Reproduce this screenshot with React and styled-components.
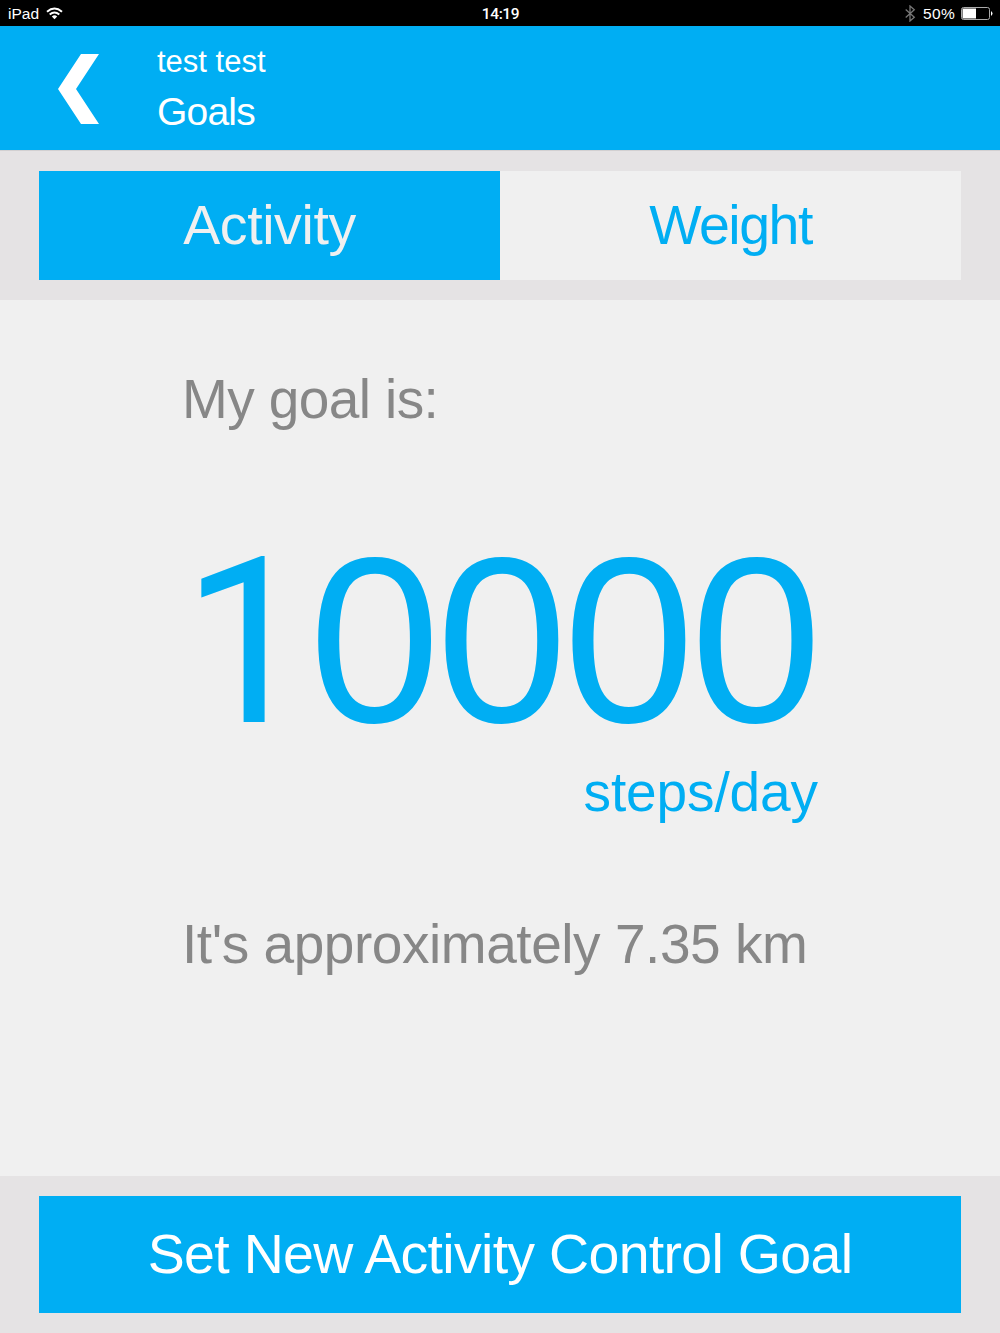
import React from 'react';
import styled, { createGlobalStyle } from 'styled-components';

const Global = createGlobalStyle`
  * { box-sizing: border-box; }
  body { margin: 0; background: #f0f0f0; font-family: "Liberation Sans", Arial, sans-serif; }
`;

const Screen = styled.div`
  width: 1000px; height: 1333px; display: flex; flex-direction: column;
  background: #f0f0f0; overflow: hidden;
`;
const StatusBar = styled.div`
  height: 26px; flex: none; background: #000; color: #fff; padding: 1px 7px 0 8px;
  display: grid; grid-template-columns: 1fr auto 1fr; align-items: center;
  font-size: 15.5px; line-height: 25px;
`;
const StatusGroup = styled.div`
  display: flex; align-items: center; gap: ${p => (p.$end ? 6 : 7)}px;
  justify-content: ${p => (p.$end ? 'flex-end' : 'flex-start')};
`;
const Clock = styled.time`
  font-family: Roboto, sans-serif; font-weight: 500; font-size: 15.5px; letter-spacing: -0.4px;
  padding-top: 1px; line-height: 24px;
`;
const Header = styled.header`
  height: 124px; flex: none; background: #00aef3; color: #fff;
  display: flex; padding-left: 57px;
`;
const Back = styled.button`
  border: 0; padding: 2px 0 0; background: none; width: 100px; display: flex; align-items: center;
`;
const Titles = styled.div`display: flex; flex-direction: column; padding-top: 18px;`;
const User = styled.div`font-size: 31px; line-height: 36px;`;
const Title = styled.div`font-size: 39px; line-height: 44px; margin-top: 10px; letter-spacing: -0.8px;`;
const TabBar = styled.nav`
  height: 150px; flex: none; background: #e5e3e4; border-top: 1px solid #d2d0d1;
  padding: 20px 39px; display: flex;
`;
const Tab = styled.button`
  flex: 1; border: 0; padding: 0 0 2px; font: inherit; font-size: 55.5px;
  background: ${p => (p.$active ? '#00aef3' : '#f0f0f0')};
  color: ${p => (p.$active ? '#f0f0f0' : '#00aef3')};
`;
const Main = styled.main`flex: 1; padding: 67px 182px 0; display: flex; flex-direction: column;`;
const Note = styled.p`
  margin: 0; color: #878787; font-size: 55px; line-height: 64px; white-space: nowrap;
  letter-spacing: ${p => p.$track}px;
`;
const Count = styled.div`
  margin-top: 94px; height: 230px; line-height: 230px; font-size: 236px; color: #00aef3;
  white-space: nowrap; letter-spacing: -4.1px; display: flex; align-items: baseline;
`;
const LeadDigit = styled.span`
  font-family: Roboto, sans-serif; font-size: 232px; line-height: 200px; letter-spacing: 0;
  width: 127px; flex: none;
`;
const Unit = styled.div`
  align-self: flex-end; font-size: 55px; line-height: 64px; color: #00aef3; letter-spacing: -0.1px;
  margin: 5px 0 88px;
`;
const Footer = styled.footer`
  height: 157px; flex: none; background: #e5e3e4; padding: 20px 39px; display: flex;
`;
const Action = styled.button`
  flex: 1; border: 0; padding: 0 0 2px; font: inherit; font-size: 55.5px; background: #00aef3; color: #fff;
`;
const Label = styled.span`
  white-space: nowrap; letter-spacing: ${p => p.$track || 0}px;
`;

export default function App() {
  return (
    <>
      <Global />
      <Screen>
        <StatusBar>
          <StatusGroup>
            <span>iPad</span>
            <svg width="17" height="13" viewBox="0 0 17 13" fill="none" stroke="#fff" strokeWidth="2">
              <path d="M1 4.7Q8.5-1.6 16 4.7M3.7 7.5Q8.5 3.4 13.3 7.5" />
              <path d="M5.8 9.4Q8.5 7.2 11.2 9.4L8.5 12.3Z" fill="#fff" stroke="none" />
            </svg>
          </StatusGroup>
          <Clock>14:19</Clock>
          <StatusGroup $end>
            <svg width="12" height="17" viewBox="0 0 12 17" fill="none" stroke="#777" strokeWidth="1.3">
              <path d="M.7 4.5 9.3 12.2 5 16V1L9.3 4.8.7 12.5" />
            </svg>
            <Label $track={0.3}>50%</Label>
            <svg width="32" height="13" viewBox="0 0 32 13">
              <rect x=".5" y=".5" width="28" height="12" rx="2" fill="none" stroke="#aaa" />
              <rect x="1.5" y="1.5" width="13.5" height="10" fill="#fff" />
              <path d="M30 4Q33 6.5 30 9Z" fill="#fff" />
            </svg>
          </StatusGroup>
        </StatusBar>
        <Header>
          <Back aria-label="Back">
            <svg width="43" height="72" viewBox="0 0 43 72"><path d="M24 1H42L19 36 42 71H24L1 36Z" fill="#fff" /></svg>
          </Back>
          <Titles><User>test test</User><Title>Goals</Title></Titles>
        </Header>
        <TabBar>
          <Tab $active><Label $track={-0.4}>Activity</Label></Tab>
          <Tab><Label $track={-1.5}>Weight</Label></Tab>
        </TabBar>
        <Main>
          <Note $track={-0.6}>My goal is:</Note>
          <Count><LeadDigit>1</LeadDigit>0000</Count>
          <Unit>steps/day</Unit>
          <Note $track={-0.45}>It's approximately 7.35 km</Note>
        </Main>
        <Footer><Action><Label $track={-0.7}>Set New Activity Control Goal</Label></Action></Footer>
      </Screen>
    </>
  );
}
